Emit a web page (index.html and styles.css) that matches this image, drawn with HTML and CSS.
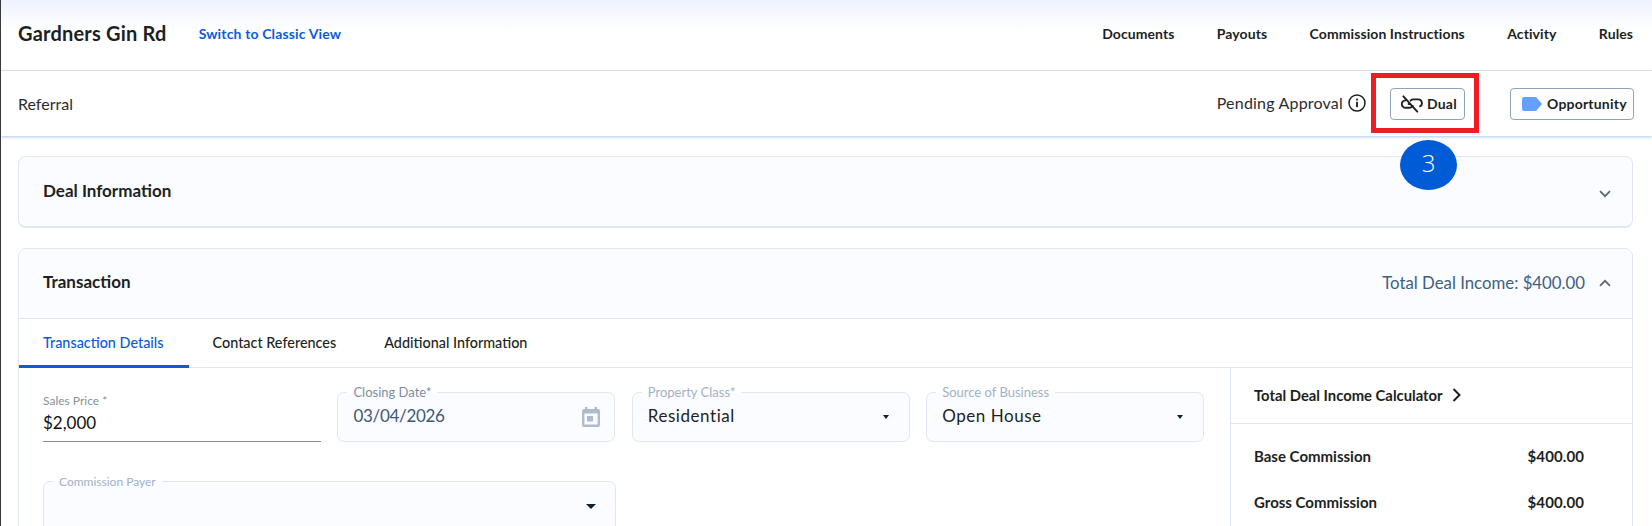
FILE: index.html
```html
<!DOCTYPE html>
<html lang="en">
<head>
<meta charset="utf-8">
<title>Gardners Gin Rd</title>
<link rel="stylesheet" href="styles.css">
</head>
<body>
<div class="page">
  <header class="topbar">
    <div class="topbar-left">
      <h1 class="title">Gardners Gin Rd</h1>
      <a class="switch">Switch to Classic View</a>
    </div>
    <nav class="nav">
      <a>Documents</a><a>Payouts</a><a>Commission Instructions</a><a>Activity</a><a>Rules</a>
    </nav>
  </header>
  <div class="subbar">
    <span class="type">Referral</span>
    <div class="status">
      <span class="pending">Pending Approval</span>
      <svg class="info" viewBox="0 0 18 18" width="18" height="18"><circle cx="9" cy="9" r="8" fill="none" stroke="#1d1f22" stroke-width="1.5"/><rect x="8.1" y="7.8" width="1.8" height="5.4" fill="#1d1f22"/><rect x="8.1" y="4.6" width="1.8" height="1.9" fill="#1d1f22"/></svg>
      <button class="pill pill-dual">
        <svg viewBox="0 0 23 18" width="22" height="18" fill="none" stroke="#1d1f22" stroke-width="2" stroke-linecap="round"><path d="M4.5 5.2A3.9 3.9 0 0 0 5 13h4a3.9 3.9 0 0 0 3.2-1.8"/><path d="M10 5.4a3.9 3.9 0 0 1 3-1.2h4.6a3.9 3.9 0 0 1 2.4 7.2"/><path d="M8 9h1.6M2.5 1l14.5 16"/></svg>
        Dual
      </button>
      <button class="pill pill-opp">
        <svg viewBox="0 0 20 14" width="20" height="14"><path d="M2 0h12l6 7-6 7H2a2 2 0 0 1-2-2V2a2 2 0 0 1 2-2z" fill="#659fff"/></svg>
        Opportunity
      </button>
    </div>
  </div>
  <main class="content">
    <section class="card card-closed">
      <div class="card-head">
        <h2>Deal Information</h2>
        <svg class="chev" viewBox="0 0 12 8" width="12" height="8"><path d="M1 1.2l5 5 5-5" fill="none" stroke="#5c6570" stroke-width="1.7"/></svg>
      </div>
    </section>
    <section class="card card-open">
      <div class="card-head card-head-open">
        <h2>Transaction</h2>
        <div class="head-right">
          <span class="income">Total Deal Income: $400.00</span>
          <svg class="chev" viewBox="0 0 12 8" width="12" height="8"><path d="M1 6.8l5-5 5 5" fill="none" stroke="#5c6570" stroke-width="1.7"/></svg>
        </div>
      </div>
      <div class="tabs">
        <a class="tab tab-active">Transaction Details</a>
        <a class="tab">Contact References</a>
        <a class="tab">Additional Information</a>
      </div>
      <div class="body">
        <div class="form">
          <div class="plain-field">
            <label>Sales Price *</label>
            <span class="plain-value">$2,000</span>
          </div>
          <div class="box box-date">
            <span class="legend legend-dark">Closing Date*</span>
            <span class="box-value value-muted">03/04/2026</span>
            <svg viewBox="0 0 20 22" width="20" height="22"><path d="M4 1h2.4v2h7.2V1H16v2h1a2 2 0 0 1 2 2v14a2 2 0 0 1-2 2H3a2 2 0 0 1-2-2V5a2 2 0 0 1 2-2h1zM3.4 7.5v11h13.2v-11z" fill="#aebccd"/><rect x="6" y="10" width="6" height="5.5" fill="#aebccd"/></svg>
          </div>
          <div class="box">
            <span class="legend">Property Class*</span>
            <span class="box-value">Residential</span>
            <i class="caret"></i>
          </div>
          <div class="box">
            <span class="legend">Source of Business</span>
            <span class="box-value">Open House</span>
            <i class="caret"></i>
          </div>
          <div class="box box-empty">
            <span class="legend legend-small">Commission Payer</span>
            <span class="box-value"></span>
            <i class="caret caret-big"></i>
          </div>
        </div>
        <aside class="side">
          <div class="side-head">
            <span>Total Deal Income Calculator</span>
            <svg viewBox="0 0 9 14" width="9" height="14"><path d="M1.5 1l6 6-6 6" fill="none" stroke="#1d1f22" stroke-width="2"/></svg>
          </div>
          <div class="side-rows">
            <div class="side-row"><span>Base Commission</span><span class="amount">$400.00</span></div>
            <div class="side-row"><span>Gross Commission</span><span class="amount">$400.00</span></div>
          </div>
        </aside>
      </div>
    </section>
  </main>
  <div class="mark-box"></div>
  <div class="mark-badge">3</div>
</div>
</body>
</html>
```

FILE: styles.css
```css
* { box-sizing: border-box; }
html, body { margin: 0; height: 100%; }
body {
  font-family: "Lato", "Liberation Sans", sans-serif;
  color: #1d1f22;
  background: #fff;
  overflow: hidden;
}
.page {
  position: relative;
  width: 1652px;
  height: 526px;
  border-left: 1px solid #3a3a3a;
  overflow: hidden;
}
.topbar {
  height: 71px;
  padding: 0 19px 4px 17px;
  display: flex;
  align-items: center;
  justify-content: space-between;
  border-bottom: 1px solid #e1e7f0;
  background: linear-gradient(#eef2fd 0, #fbfcff 22px, #fff 34px);
}
.topbar-left { display: flex; align-items: center; gap: 32px; }
.title { margin: 0; font-size: 20px; font-weight: 700; letter-spacing: .2px; }
.switch { font-size: 14px; font-weight: 700; color: #0b5cdb; letter-spacing: .15px; }
.nav { display: flex; gap: 42.4px; font-size: 14px; font-weight: 700; letter-spacing: .08px; }
.subbar {
  height: 65px;
  padding: 0 18px 0 17px;
  display: flex;
  align-items: center;
  justify-content: space-between;
  background: #fff;
  box-shadow: 0 1px 3px rgba(70, 130, 220, .45);
  position: relative;
}
.type { font-size: 16px; color: #2a2c30; margin-top: -1px; }
.status { display: flex; align-items: center; }
.pending { font-size: 16px; color: #2a2c30; letter-spacing: .2px; margin-top: -3px; }
.info { margin: -2px 24px 0 5px; }
.pill {
  height: 32px;
  display: flex;
  align-items: center;
  gap: 4px;
  border: 1px solid #8fa3ba;
  border-radius: 4px;
  background: #fff;
  font: 700 14px "Lato", sans-serif;
  letter-spacing: .2px;
  color: #1d1f22;
  padding: 0;
}
.pill-dual { width: 75px; padding-left: 10px; margin-right: 45px; }
.pill-opp { width: 124px; padding-left: 11px; gap: 5px; }
.content { padding: 20px 19px 0 17px; }
.card {
  border: 1px solid #e1e7f0;
  border-radius: 8px;
  background: #fff;
  overflow: hidden;
}
.card-closed { height: 72px; margin-bottom: 20px; border-bottom-width: 2px; background: #fafcff; }
.card-open { height: 400px; }
.card-head {
  display: flex;
  align-items: center;
  justify-content: space-between;
  padding: 0 21px 0 24px;
  height: 68px;
  background: #fafcff;
}
.card-closed .chev { margin-top: 5px; }
.card-head-open { height: 70px; border-bottom: 1px solid #e1e7f0; }
.card-head h2 { margin: -2px 0 0; font-size: 17px; font-weight: 700; }
.card-head-open h2 { margin-top: -4px; }
.head-right { display: flex; align-items: center; gap: 14px; margin-top: -2px; }
.income { font-size: 16.8px; color: #40607f; }
.tabs { height: 49px; display: flex; border-bottom: 1px solid #e1e7f0; }
.tab {
  display: flex;
  align-items: center;
  justify-content: center;
  height: 49px;
  font-size: 14.4px;
  font-weight: 500;
  padding: 0 24px 2px;
  color: #1d1f22;
}
.tab-active { color: #0b5cdb; border-bottom: 3px solid #0b5cdb; padding: 0 25px 0 24px; }
.body { display: flex; }
.form {
  width: 1211px;
  flex: none;
  padding: 24px 0 0 24px;
  display: grid;
  grid-template-columns: repeat(4, 278px);
  grid-template-rows: 50px 60px;
  column-gap: 16.4px;
  row-gap: 39px;
}
.plain-field {
  display: flex;
  flex-direction: column;
  border-bottom: 1px solid #8c8c8c;
  padding-top: 1px;
}
.plain-field label { font-size: 12px; color: #8b8f94; }
.plain-value { font-size: 17px; margin-top: 4px; color: #111; }
.box {
  position: relative;
  border: 1px solid #e1e7f0;
  border-radius: 7px;
  background: #fafcff;
  display: flex;
  align-items: center;
  justify-content: space-between;
  padding: 0 15px 0 15px;
}
.box-date { padding-right: 13px; }
.box-empty { grid-column: 1 / span 2; width: 573px; height: 60px; border-radius: 7px 7px 0 0; }
.legend {
  position: absolute;
  top: -7px;
  left: 9px;
  padding: 0 6px;
  font-size: 13px;
  line-height: 13px;
  color: #a2b2c4;
  background: linear-gradient(#fff 50%, #fafcff 50%);
}
.legend-dark { color: #7d8ea3; }
.legend-small { font-size: 12px; }
.box-value { font-size: 17px; color: #1d1f22; letter-spacing: .55px; padding-bottom: 4px; }
.value-muted { color: #3f5775; letter-spacing: -.3px; }
.caret {
  width: 0;
  height: 0;
  margin-right: 5px;
  border-left: 3.5px solid transparent;
  border-right: 3.5px solid transparent;
  border-top: 4px solid #0d2138;
}
.caret-big {
  border-left-width: 5px;
  border-right-width: 5px;
  border-top-width: 5px;
  margin-top: -10px;
  margin-right: 4px;
}
.side { flex: 1; border-left: 1px solid #e1e7f0; height: 200px; }
.side-head {
  height: 56px;
  padding: 0 0 2px 23px;
  display: flex;
  align-items: center;
  gap: 9px;
  font-size: 14.8px;
  font-weight: 700;
  border-bottom: 1px solid #e1e7f0;
}
.side-rows { padding: 9px 48px 0 23px; }
.side-row {
  height: 46px;
  display: flex;
  align-items: center;
  justify-content: space-between;
  font-size: 15px;
  font-weight: 700;
}
.amount { letter-spacing: .1px; }
.mark-box {
  position: absolute;
  left: 1370px;
  top: 73px;
  width: 108px;
  height: 60px;
  border: 5px solid #ee1c25;
}
.mark-badge {
  position: absolute;
  left: 1399px;
  top: 140px;
  width: 57px;
  height: 50px;
  border-radius: 50%;
  background: #005bd6;
  color: #fff;
  font: 300 24px/46px "Open Sans", sans-serif;
  text-align: center;
}
```
